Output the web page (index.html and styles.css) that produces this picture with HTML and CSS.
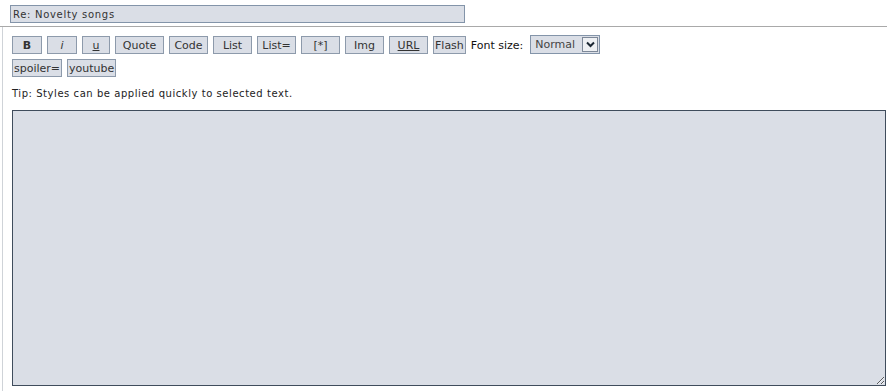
FILE: index.html
```html
<!DOCTYPE html>
<html lang="en">
<head>
    <meta charset="UTF-8">
    <title>Post a reply</title>
    <link rel="stylesheet" href="styles.css">
</head>
<body>
    <div class="subject-row">
        <input type="text" class="post-input subject" name="subject" value="Re: Novelty songs">
    </div>
    <div class="message-cell">
        <div class="toolbar">
            <button type="button" class="post-btn w30 bold">B</button>
            <button type="button" class="post-btn w30 ital">i</button>
            <button type="button" class="post-btn w28 under">u</button>
            <button type="button" class="post-btn w49">Quote</button>
            <button type="button" class="post-btn w39">Code</button>
            <button type="button" class="post-btn w39">List</button>
            <button type="button" class="post-btn w39">List=</button>
            <button type="button" class="post-btn w39">[*]</button>
            <button type="button" class="post-btn w39">Img</button>
            <button type="button" class="post-btn w39 under">URL</button>
            <button type="button" class="post-btn">Flash</button>
            <span class="gen">Font size:</span>
            <span class="size-select">
                <select name="fontsize">
                    <option>Normal</option>
                    <option>Tiny</option>
                    <option>Small</option>
                    <option>Large</option>
                    <option>Huge</option>
                </select>
                <span class="arrow">
                    <svg width="11" height="11" viewBox="0 0 11 11"><path d="M2 3.5 L5.5 7 L9 3.5" fill="none" stroke="#1b2733" stroke-width="2"/></svg>
                </span>
            </span>
        </div>
        <div class="toolbar">
            <button type="button" class="post-btn">spoiler=</button>
            <button type="button" class="post-btn">youtube</button>
        </div>
        <p class="tip">Tip: Styles can be applied quickly to selected text.</p>
        <textarea class="post-input message" name="message"></textarea>
    </div>
</body>
</html>
```

FILE: styles.css
```css
body {
    margin: 0;
    background: #ffffff;
    font-family: "DejaVu Sans", Verdana, sans-serif;
    color: #222;
}
.subject-row {
    padding: 5px 0 3px 10px;
    border-bottom: 1px solid #a9a9a9;
}
.post-input {
    display: block;
    box-sizing: border-box;
    background: #dadee6;
    border: 1px solid #8394a9;
    font-family: "DejaVu Sans", Verdana, sans-serif;
    color: #333;
    margin: 0;
}
.subject {
    width: 455px;
    height: 18px;
    padding: 0 2px;
    font-size: 10px;
    letter-spacing: 0.7px;
}
.message-cell {
    border-left: 1px solid #cfd3d8;
    margin-left: 2px;
    padding: 9px 2px 6px 9px;
}
.toolbar {
    display: flex;
    align-items: center;
    gap: 5px;
    height: 18px;
    margin-bottom: 5px;
}
.post-btn {
    box-sizing: border-box;
    height: 18px;
    padding: 0 1px;
    margin: 0;
    background: #dadee6;
    border: 1px solid #8d9aab;
    font-family: "DejaVu Sans", Verdana, sans-serif;
    font-size: 11px;
    color: #333;
    cursor: pointer;
}
.w28 { width: 28px; }
.w30 { width: 30px; }
.w39 { width: 39px; }
.w49 { width: 49px; }
.bold { font-weight: bold; }
.ital { font-style: italic; }
.under { text-decoration: underline; }
.gen {
    font-size: 11px;
    color: #111;
}
.size-select {
    display: flex;
    align-items: center;
    box-sizing: border-box;
    height: 19px;
    width: 70px;
    margin: -1px 0 0 2px;
    background: #dadee6;
    border: 1px solid #8394a9;
    padding-right: 1px;
}
.size-select select {
    appearance: none;
    -webkit-appearance: none;
    flex: 1;
    min-width: 0;
    border: none;
    background: transparent;
    font-family: "DejaVu Sans", Verdana, sans-serif;
    font-size: 11px;
    color: #444;
    padding: 0 0 0 4px;
    margin: 0;
    outline: none;
}
.arrow {
    display: flex;
    align-items: center;
    justify-content: center;
    box-sizing: border-box;
    width: 16px;
    height: 15px;
    background: #eef0f3;
    border: 1px solid #7d8898;
}
.tip {
    font-size: 10px;
    letter-spacing: 0.55px;
    margin: 11px 0 11px;
    color: #222;
}
.message {
    width: 874px;
    height: 276px;
    border-color: #3f4c5c;
    resize: both;
}
```
